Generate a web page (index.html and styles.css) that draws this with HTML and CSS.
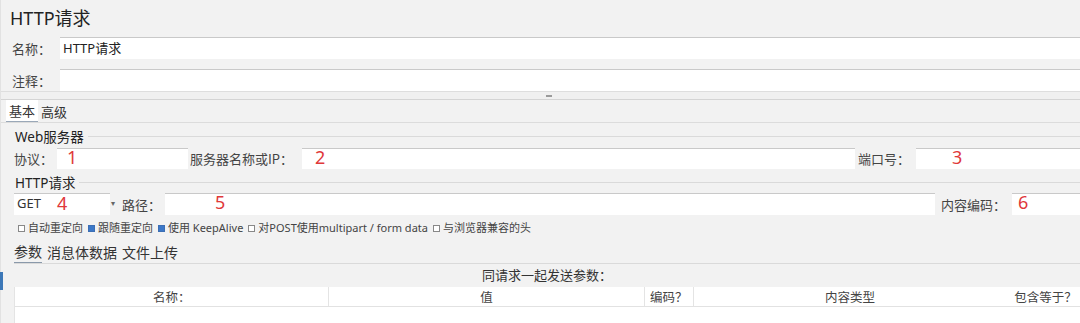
FILE: index.html
```html
<!DOCTYPE html>
<html>
<head>
    <meta charset="utf-8">
    <title>HTTP请求</title>
    <link rel="stylesheet" href="styles.css">
</head>
<body>
    <div class="frame">
        <div class="accent"></div>
        <div class="title">HTTP请求</div>

        <div class="field-row">
            <span class="field-label">名称：</span>
            <div class="input">HTTP请求</div>
        </div>
        <div class="field-row second">
            <span class="field-label">注释：</span>
            <div class="input"></div>
        </div>

        <div class="splitter"><span class="grip"></span></div>

        <div class="tabs">
            <span class="tab active">基本</span>
            <span class="tab">高级</span>
        </div>

        <div class="group">
            <div class="group-title">Web服务器</div>
            <div class="row">
                <span class="lbl l-proto">协议：</span>
                <div class="input proto"><span class="num">1</span></div>
                <span class="lbl l-host">服务器名称或IP：</span>
                <div class="input host"><span class="num">2</span></div>
                <span class="lbl l-port">端口号：</span>
                <div class="input port"><span class="num">3</span></div>
            </div>

            <div class="group-title http">HTTP请求</div>
            <div class="row tall">
                <div class="select">GET <span class="num">4</span><span class="arrow">▾</span></div>
                <span class="lbl l-path">路径：</span>
                <div class="input path"><span class="num">5</span></div>
                <span class="lbl l-enc">内容编码：</span>
                <div class="input enc"><span class="num">6</span></div>
            </div>

            <div class="checks">
                <span class="check"><span class="box"></span>自动重定向</span>
                <span class="check"><span class="box on"></span>跟随重定向</span>
                <span class="check"><span class="box on"></span>使用 KeepAlive</span>
                <span class="check"><span class="box"></span>对POST使用multipart / form data</span>
                <span class="check"><span class="box"></span>与浏览器兼容的头</span>
            </div>

            <div class="subtabs">
                <span class="subtab active">参数</span>
                <span class="subtab">消息体数据</span>
                <span class="subtab">文件上传</span>
            </div>

            <div class="caption">同请求一起发送参数：</div>
            <div class="table">
                <div class="thead">
                    <div class="th c-name">名称：</div>
                    <div class="th c-value">值</div>
                    <div class="th c-enc">编码？</div>
                    <div class="th c-type">内容类型</div>
                    <div class="th c-eq">包含等于？</div>
                </div>
                <div class="tbody"></div>
            </div>
        </div>
    </div>
</body>
</html>
```

FILE: styles.css
```css
body {
    margin: 0;
    background: #f2f2f2;
    font-family: "Segoe UI", "Noto Sans", "Noto Sans CJK SC", sans-serif;
    color: #333;
    overflow: hidden;
}

.frame {
    position: relative;
    width: 1080px;
    height: 323px;
    border-left: 1px solid #e2e2e2;
    box-sizing: border-box;
}

.accent {
    position: absolute;
    left: -1px;
    top: 272px;
    width: 3px;
    height: 18px;
    background: #3d78b8;
}

.title {
    height: 36px;
    line-height: 36px;
    padding-left: 9px;
    font-size: 18px;
    color: #222;
    font-family: "Noto Sans", "Noto Sans CJK SC", sans-serif;
}

.field-row {
    display: flex;
    align-items: center;
    height: 22px;
    margin-top: 1px;
}

.field-row.second {
    margin-top: 10px;
}

.field-label {
    width: 48px;
    padding-left: 11px;
    font-size: 13px;
    color: #444;
    flex-shrink: 0;
}

.input {
    flex: 1;
    height: 100%;
    background: #fff;
    border-top: 1px solid #c9c9c9;
    box-sizing: border-box;
    font-size: 13px;
    line-height: 20px;
    padding-left: 3px;
    color: #222;
    position: relative;
}

.splitter {
    position: relative;
    height: 9px;
    border-top: 1px solid #dedede;
    border-bottom: 1px solid #d4d4d4;
    box-sizing: border-box;
    background: #f0f0f0;
}

.grip {
    position: absolute;
    left: 545px;
    top: 3px;
    width: 6px;
    height: 2px;
    background: #9a9a9a;
}

.tabs {
    display: flex;
    height: 22px;
    align-items: flex-end;
    border-bottom: 1px solid #dcdcdc;
    font-size: 13px;
    font-family: "Noto Sans CJK SC", sans-serif;
}

.tab {
    padding: 0 3px;
    height: 21px;
    line-height: 21px;
    color: #333;
}

.tab.active {
    background: #fff;
    margin-left: 5px;
    border-bottom: 1px solid #9aa8b8;
}

.group {
    padding-left: 13px;
}

.group-title {
    height: 20px;
    line-height: 20px;
    margin-top: 4px;
    font-size: 13.5px;
    color: #222;
    padding-left: 1px;
    display: flex;
    align-items: center;
    gap: 4px;
}

.group-title::after {
    content: "";
    flex: 1;
    border-top: 1px solid #dadada;
    margin-top: -2px;
}

.group-title.http {
    margin-top: 4px;
}

.row {
    display: flex;
    align-items: center;
    height: 21px;
    margin-top: 1px;
}

.row.tall {
    height: 22px;
    margin-top: 0;
}

.lbl {
    font-size: 13px;
    color: #444;
    white-space: nowrap;
    flex-shrink: 0;
    box-sizing: border-box;
    font-family: "Noto Sans CJK SC", sans-serif;
}

.l-proto { width: 43px; }
.l-host { width: 114px; padding-left: 2px; }
.l-port { width: 61px; padding-left: 3px; }
.l-path { width: 48px; padding-left: 5px; }
.l-enc { width: 77px; padding-left: 6px; }

.proto { flex: none; width: 131px; }
.host { flex: none; width: 553px; }
.port { flex: none; width: 164px; }
.path { flex: none; width: 770px; }
.enc { flex: none; width: 68px; }

.num {
    position: absolute;
    top: -1px;
    color: #e0383a;
    font-size: 18px;
    line-height: 18px;
    font-family: "Noto Sans", sans-serif;
}

.proto .num { left: 10px; }
.host .num { left: 13px; }
.port .num { left: 36px; }
.path .num { left: 50px; }
.enc .num { left: 6px; }

.select {
    position: relative;
    width: 103px;
    height: 100%;
    font-size: 13px;
    line-height: 20px;
    flex-shrink: 0;
    padding-left: 3px;
    box-sizing: border-box;
    z-index: 0;
}

.select::before {
    content: "";
    position: absolute;
    left: 0;
    top: 0;
    width: 96px;
    height: 100%;
    background: #fff;
    border-top: 1px solid #c9c9c9;
    box-sizing: border-box;
    z-index: -1;
}

.select .num { left: 43px; top: 1px; }

.arrow {
    position: absolute;
    right: 2px;
    top: 0;
    font-size: 8px;
    color: #666;
}

.checks {
    display: flex;
    gap: 5px;
    height: 12px;
    margin-top: 7px;
    padding-left: 4px;
    font-size: 11px;
    line-height: 12px;
    color: #444;
    font-family: "Noto Sans", "Noto Sans CJK SC", sans-serif;
}

.check {
    display: flex;
    align-items: center;
    gap: 3px;
}

.box {
    width: 5px;
    height: 5px;
    border: 1px solid #888;
    background: #fff;
}

.box.on {
    border-color: #3c6fb4;
    background: #3c78c8;
}

.subtabs {
    display: flex;
    gap: 5px;
    height: 22px;
    margin-top: 7px;
    align-items: center;
    border-bottom: 1px solid #dadada;
    font-size: 14px;
    font-family: "Noto Sans CJK SC", sans-serif;
    color: #333;
}

.subtab.active {
    height: 22px;
    line-height: 21px;
    box-sizing: border-box;
    border-bottom: 1px solid #8a99aa;
}

.caption {
    height: 22px;
    line-height: 22px;
    text-align: center;
    font-size: 13px;
    color: #333;
    font-family: "Noto Sans CJK SC", sans-serif;
}

.table {
    margin-top: 1px;
    border-left: 1px solid #e4e4e4;
    font-family: "Noto Sans CJK SC", sans-serif;
}

.thead {
    display: flex;
    height: 19px;
    background: #fff;
    border-bottom: 1px solid #e2e2e2;
}

.th {
    font-size: 12.5px;
    line-height: 19px;
    text-align: center;
    color: #444;
    border-right: 1px solid #e4e4e4;
    box-sizing: border-box;
}

.c-name { width: 315px; }
.c-value { width: 316px; }
.c-enc { width: 49px; }
.c-type { width: 313px; border-right: none; }
.c-eq { width: 74px; border-right: none; text-align: left; padding-left: 8px; }

.tbody {
    height: 22px;
    background: #fff;
}
```
